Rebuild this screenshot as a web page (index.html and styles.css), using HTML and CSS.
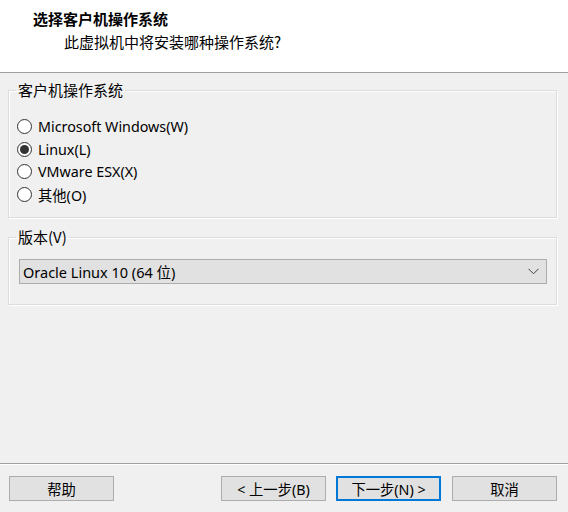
FILE: index.html
```html
<!DOCTYPE html>
<html lang="zh-CN">
<head>
<meta charset="utf-8">
<title>新建虚拟机向导</title>
<link rel="stylesheet" href="styles.css">
</head>
<body>
<div class="wizard">
  <header class="head">
    <div class="title">选择客户机操作系统</div>
    <div class="subtitle">此虚拟机中将安装哪种操作系统?</div>
  </header>
  <main class="content">
    <fieldset class="group group-os">
      <legend>客户机操作系统</legend>
      <div class="radios">
        <label class="radio"><span class="dot"></span>Microsoft Windows(W)</label>
        <label class="radio checked"><span class="dot"></span>Linux(L)</label>
        <label class="radio"><span class="dot"></span>VMware ESX(X)</label>
        <label class="radio"><span class="dot"></span>其他(O)</label>
      </div>
    </fieldset>
    <fieldset class="group group-ver">
      <legend>版本(V)</legend>
      <div class="select">
        <span class="select-text">Oracle Linux 10 (64 位)</span>
        <svg class="chev" width="11" height="7" viewBox="0 0 11 7"><path d="M0.5 0.8 L5.5 5.8 L10.5 0.8" fill="none" stroke="#404040" stroke-width="1"/></svg>
      </div>
    </fieldset>
  </main>
  <footer class="foot">
    <button class="btn">帮助</button>
    <div class="spacer"></div>
    <button class="btn">&lt; 上一步(B)</button>
    <button class="btn primary">下一步(N) &gt;</button>
    <button class="btn cancel">取消</button>
  </footer>
</div>
</body>
</html>
```
FILE: styles.css
```css
* { box-sizing: border-box; }
html, body { margin: 0; padding: 0; }
body {
  width: 568px;
  height: 512px;
  background: #f0f0f0;
  font-family: "Noto Sans", "Noto Sans CJK SC", sans-serif;
  font-size: 14px;
  color: #000;
  overflow: hidden;
}
.wizard {
  display: flex;
  flex-direction: column;
  height: 512px;
}
.head {
  height: 73px;
  background: #fff;
  border-bottom: 1px solid #a0a0a0;
  padding: 8px 0 0 33px;
  font-family: "Noto Sans CJK SC", sans-serif;
  font-size: 15px;
  line-height: 22px;
}
.title { font-weight: 700; }
.subtitle { padding-left: 31px; margin-top: 1px; }
.content {
  flex: 1;
  padding: 9px 11px 0 8px;
  display: flex;
  flex-direction: column;
  gap: 11px;
}
.group {
  margin: 0;
  border: 1px solid #dcdcdc;
  box-shadow: inset 1px 1px 0 #fff, 1px 1px 0 #fff;
  padding: 0;
}
.group legend {
  margin-left: 7px;
  padding: 0 2px;
  font-family: "Noto Sans CJK SC", sans-serif;
  font-size: 15px;
  line-height: 16px;
}
.group-os { height: 136px; }
.radios {
  display: flex;
  flex-direction: column;
  padding: 17px 0 0 8px;
}
.radio {
  display: flex;
  align-items: center;
  height: 22.7px;
  gap: 6px;
  font-size: 14.3px;
}
.dot {
  width: 15px;
  height: 15px;
  border: 1px solid #333;
  border-radius: 50%;
  background: #fff;
  display: flex;
  align-items: center;
  justify-content: center;
}
.checked .dot::after {
  content: "";
  width: 9px;
  height: 9px;
  border-radius: 50%;
  background: #333;
}
.group-ver { height: 76px; }
.select {
  margin: 14px 9px 0 10px;
  height: 25px;
  background: #e1e1e1;
  border: 1px solid #adadad;
  display: flex;
  align-items: center;
  padding: 0 0 0 3px;
  font-size: 14.5px;
}
.select-text { flex: 1; }
.chev { margin-right: 7px; }
.foot {
  height: 49px;
  border-top: 1px solid #a0a0a0;
  box-shadow: inset 0 1px 0 #fff;
  display: flex;
  align-items: flex-start;
  padding: 12px 11px 0 9px;
  gap: 10px;
}
.spacer { flex: 1; }
.btn {
  width: 105px;
  height: 25px;
  background: #e1e1e1;
  border: 1px solid #adadad;
  font-family: "Noto Sans", "Noto Sans CJK SC", sans-serif;
  font-size: 14.3px;
  padding: 0;
  color: #000;
}
.btn.primary { border: 2px solid #0078d7; }
.btn.cancel { margin-left: 1px; }
```
